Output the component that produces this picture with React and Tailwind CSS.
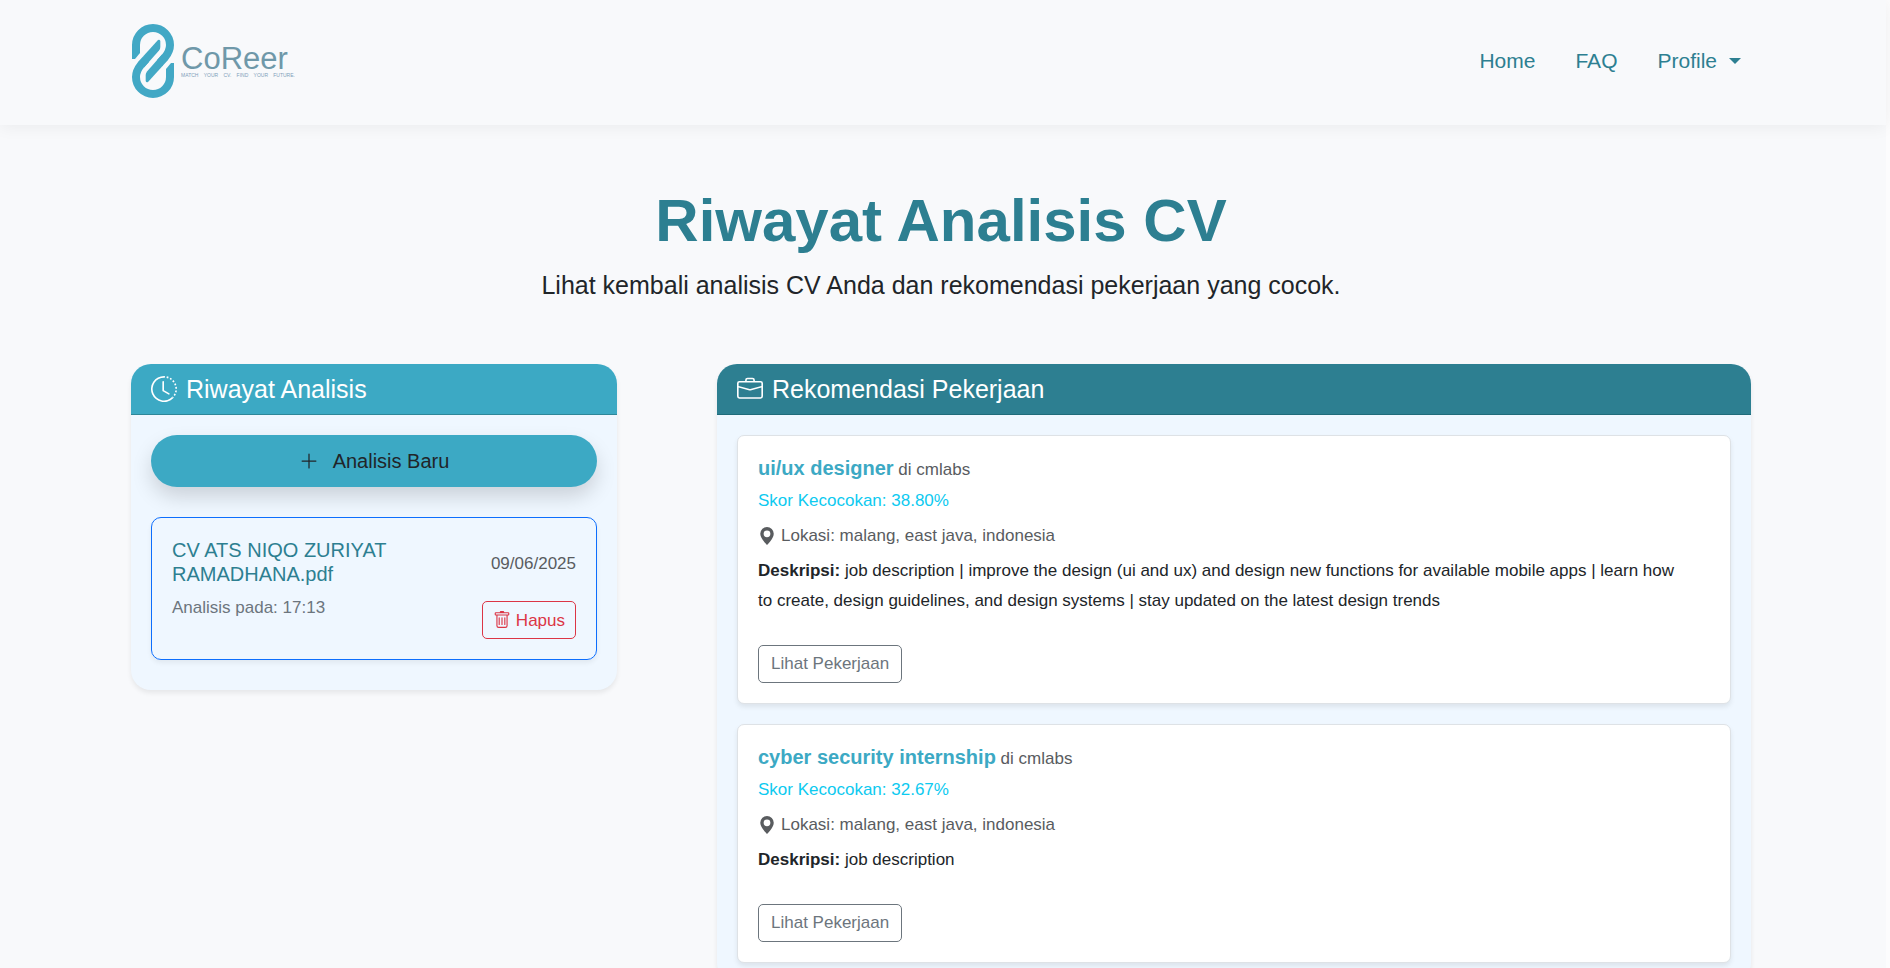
import { BsClockHistory, BsBriefcase, BsPlusLg, BsTrash, BsGeoAltFill } from "react-icons/bs";

const jobs = [
  {
    title: "ui/ux designer",
    company: "cmlabs",
    score: "38.80%",
    location: "malang, east java, indonesia",
    description:
      "job description | improve the design (ui and ux) and design new functions for available mobile apps | learn how to create, design guidelines, and design systems | stay updated on the latest design trends",
  },
  {
    title: "cyber security internship",
    company: "cmlabs",
    score: "32.67%",
    location: "malang, east java, indonesia",
    description: "job description",
  },
];

const tagline = ["MATCH", "YOUR", "CV.", "FIND", "YOUR", "FUTURE."];

function LogoHalf() {
  return (
    <>
      <path d="M5 24V23A17 17 0 0 1 39 23C39 28 37.500 31 34 35.300L29 40.800" fill="none" stroke="#42a8c5" strokeWidth="8" />
      <path d="M1 23H9V31L4 37H1Z" fill="#42a8c5" />
      <path d="M31 32.600L16 49.500Q14.700 51 14.700 53V59Q15.300 61 17 60L32 43.500Z" fill="#42a8c5" />
    </>
  );
}

function Logo() {
  return (
    <a href="#home" className="flex gap-[6px]">
      <svg width="44" height="78" viewBox="0 0 44 78" aria-hidden="true">
        <LogoHalf />
        <g transform="rotate(180 22 39)">
          <LogoHalf />
        </g>
      </svg>
      <span className="flex w-[114px] flex-col pt-[23px]">
        <span className="text-[31px] leading-[28px] text-[#6f98a9]">CoReer</span>
        <span className="flex justify-between text-[5px] leading-[5px] text-[#7f9fba]">
          {tagline.map((word, i) => (
            <span key={i}>{word}</span>
          ))}
        </span>
      </span>
    </a>
  );
}

function Navbar() {
  return (
    <header className="bg-[#f8f9fb] pr-1 shadow-[0_2px_16px_rgba(0,0,0,0.06)]">
      <div className="mx-auto flex h-[125px] max-w-[1620px] items-start justify-between pt-[22px]">
        <Logo />
        <nav className="flex h-[78px] items-center gap-5 text-[21px] leading-[30px] text-[#2d7f91]">
          <a href="#home" className="px-[10px]">Home</a>
          <a href="#faq" className="px-[10px]">FAQ</a>
          <button type="button" className="flex items-center gap-3 px-[10px]">
            Profile
            <svg width="12" height="6" viewBox="0 0 12 6" fill="currentColor" aria-hidden="true"><path d="M0 0H12L6 6Z" /></svg>
          </button>
        </nav>
      </div>
    </header>
  );
}

function JobCard({ job }) {
  return (
    <article className="rounded-[7px] border border-[#dee2e6] bg-white p-5 text-[17px] leading-[30px] shadow-[0_3px_5px_rgba(0,0,0,0.08)]">
      <h3 className="leading-[24px] text-[#595c5f]">
        <span className="text-[20px] font-bold text-[#3ca9c4]">{job.title}</span> di {job.company}
      </h3>
      <p className="mt-1 text-[#0dcaf0]">Skor Kecocokan: {job.score}</p>
      <p className="mt-[5px] flex items-center gap-[5px] text-[#595c5f]">
        <BsGeoAltFill size={18} />
        Lokasi: {job.location}
      </p>
      <p className="mt-[5px] pr-5">
        <strong>Deskripsi:</strong> {job.description}
      </p>
      <a href="#job" className="mt-[29px] flex h-[38px] w-fit items-center rounded-[5px] border border-[#6c757d] px-3 text-[#6c757d]">
        Lihat Pekerjaan
      </a>
    </article>
  );
}

export default function App() {
  return (
    <div className="min-h-screen border-r-4 border-[#fcfcfd] bg-[#f8f9fb] font-['Liberation_Sans',Arial,sans-serif] text-[#212529]">
      <Navbar />
      <main className="pr-1">
        <div className="mx-auto max-w-[1620px]">
          <div className="pt-[60px] text-center">
            <h1 className="text-[60px] font-bold leading-[72px] text-[#2d7f91]">Riwayat Analisis CV</h1>
            <p className="mt-[9px] text-[25px] leading-[38px]">
              Lihat kembali analisis CV Anda dan rekomendasi pekerjaan yang cocok.
            </p>
          </div>
          <div className="mt-[60px] flex items-start gap-[100px]">
            <section className="w-[30%] rounded-[20px] bg-[#eff7ff] shadow-[0_3px_5px_rgba(0,0,0,0.075)]">
              <h2 className="flex h-[51px] items-center gap-[9px] rounded-t-[20px] border-b border-[#2d8799] bg-[#3ca9c4] px-5 text-[25px] leading-[30px] text-white">
                <BsClockHistory size={26} />
                Riwayat Analisis
              </h2>
              <div className="px-5 pt-5 pb-[30px]">
                <button type="button" className="flex h-[52px] w-full items-center justify-center gap-[14px] rounded-full bg-[#3ca9c4] text-[20px] text-[#212529] shadow-[0_10px_20px_rgba(0,0,0,0.15)]">
                  <BsPlusLg size={20} />
                  Analisis Baru
                </button>
                <div className="mt-[30px] flex justify-between rounded-[10px] border border-[#0d6efd] p-5 text-[17px] leading-[27px] shadow-[0_3px_5px_rgba(0,0,0,0.06)]">
                  <div>
                    <h3 className="max-w-[240px] text-[20px] leading-[24px] text-[#2d7f91]">CV ATS NIQO ZURIYAT RAMADHANA.pdf</h3>
                    <p className="mt-2 text-[#6c757d]">Analisis pada: 17:13</p>
                  </div>
                  <div className="flex flex-col items-end pt-3">
                    <span className="text-[#595c5f]">09/06/2025</span>
                    <button type="button" className="mt-6 flex h-[38px] items-center gap-[5px] rounded-[5px] border border-[#dc3545] px-[10px] text-[#dc3545]">
                      <BsTrash size={18} />
                      Hapus
                    </button>
                  </div>
                </div>
              </div>
            </section>
            <section className="min-w-0 flex-1 rounded-[20px] bg-[#eff7ff] shadow-[0_3px_5px_rgba(0,0,0,0.075)]">
              <h2 className="flex h-[51px] items-center gap-[9px] rounded-t-[20px] border-b border-[#1f6b7a] bg-[#2d7f91] px-5 text-[25px] leading-[30px] text-white">
                <BsBriefcase size={26} />
                Rekomendasi Pekerjaan
              </h2>
              <div className="flex flex-col gap-5 p-5">
                {jobs.map((job) => (
                  <JobCard key={job.title} job={job} />
                ))}
              </div>
            </section>
          </div>
        </div>
      </main>
    </div>
  );
}
